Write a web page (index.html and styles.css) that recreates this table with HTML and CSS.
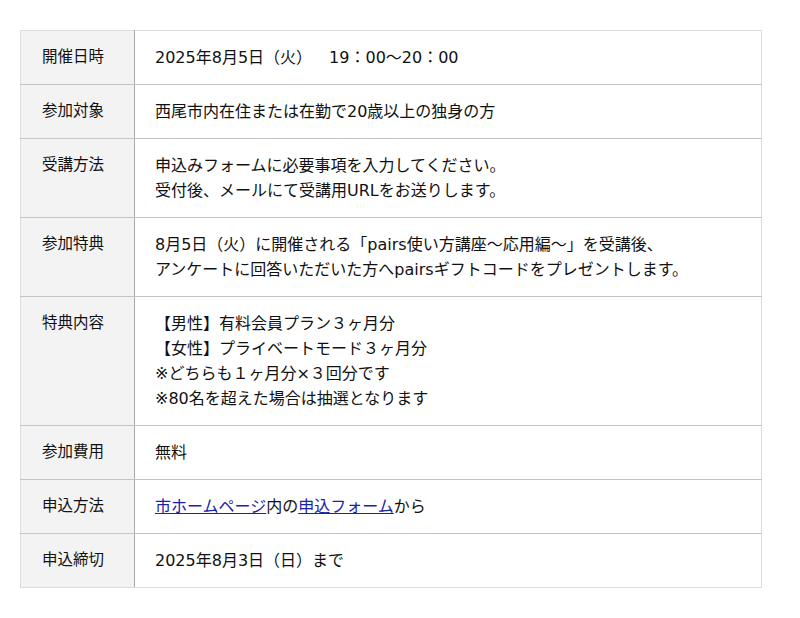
FILE: index.html
```html
<!DOCTYPE html>
<html lang="ja">
<head>
<meta charset="utf-8">
<link rel="stylesheet" href="styles.css">
</head>
<body>
<table class="info">
<tr><th>開催日時</th><td>2025年8月5日（火）<span class="gap">　</span>19：00～20：00</td></tr>
<tr><th>参加対象</th><td>西尾市内在住または在勤で20歳以上の独身の方</td></tr>
<tr><th>受講方法</th><td>申込みフォームに必要事項を入力してください。<br>受付後、メールにて受講用URLをお送りします。</td></tr>
<tr><th>参加特典</th><td>8月5日（火）に開催される「pairs使い方講座～応用編～」を受講後、<br>アンケートに回答いただいた方へpairsギフトコードをプレゼントします。</td></tr>
<tr><th>特典内容</th><td>【男性】有料会員プラン３ヶ月分<br>【女性】プライベートモード３ヶ月分<br>※どちらも１ヶ月分×３回分です<br>※80名を超えた場合は抽選となります</td></tr>
<tr><th>参加費用</th><td>無料</td></tr>
<tr><th>申込方法</th><td><a href="#">市ホームページ</a>内の<a href="#">申込フォーム</a>から</td></tr>
<tr><th>申込締切</th><td>2025年8月3日（日）まで</td></tr>
</table>
</body>
</html>
```
FILE: styles.css
```css
body {
  margin: 0;
  padding: 30px 38px 0 20px;
  background: #fff;
  font-family: "DejaVu Sans", "Noto Sans CJK JP", sans-serif;
  font-size: 16px;
  color: #111;
}
.info {
  width: 742px;
  border-collapse: collapse;
  border: 1px solid #ddd;
}
.info th, .info td {
  text-align: left;
  vertical-align: top;
  line-height: 25px;
  padding: 14px 20px 14px 20px;
  border-top: 1px solid #c4c4c4;
  border-bottom: 1px solid #c4c4c4;
  font-weight: normal;
}
.info tr:first-child th, .info tr:first-child td { border-top: 1px solid #ddd; }
.info tr:last-child th, .info tr:last-child td { border-bottom: 1px solid #ddd; }
.info th {
  width: 72px;
  background: #f3f3f3;
  border-right: 1px solid #aaa;
  padding-left: 21px;
  font-size: 15.5px;
}
.info td { border-right: 1px solid #ddd; }
.info a { color: #1a22a8; }
.gap { margin-right: 9px; }
```
